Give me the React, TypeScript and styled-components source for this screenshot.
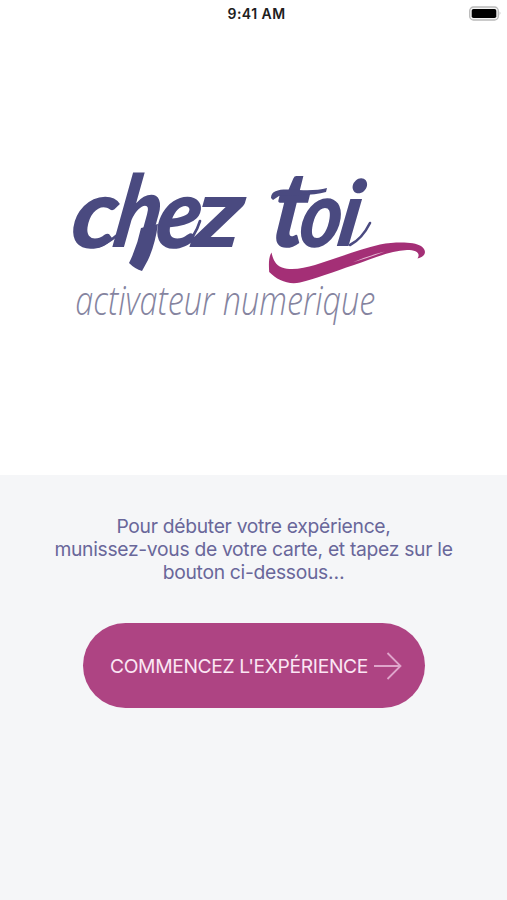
import React from 'react';
import styled, { createGlobalStyle } from 'styled-components';

const GlobalStyle = createGlobalStyle`
  *, *::before, *::after { box-sizing: border-box; }
  html, body { margin: 0; padding: 0; background: #fff; }
  body { font-family: Inter, 'Liberation Sans', sans-serif; }
`;

const Screen = styled.div`
  display: flex;
  flex-direction: column;
  width: 100%;
  height: 900px;
  overflow: hidden;
`;

const StatusBar = styled.header`
  display: grid;
  grid-template-columns: 1fr auto 1fr;
  align-items: center;
  height: 28px;
  padding: 0 5px 0 11px;
`;

const Clock = styled.time`
  grid-column: 2;
  font-size: 14px;
  font-weight: 600;
  line-height: 28px;
  letter-spacing: 0.45px;
  color: #202020;
`;

const Battery = styled.svg`
  justify-self: end;
  display: block;
  margin-bottom: 2px;
`;

const Hero = styled.section`
  display: flex;
  justify-content: center;
  height: 447px;
  padding-top: 132px;
`;

const Logo = styled.svg`
  display: block;
  width: 367px;
  height: 180px;
  margin-right: 9px;
  overflow: visible;
`;

const Brush = styled.text`
  font-family: Lato, sans-serif;
  font-size: 100px;
  font-weight: 900;
  font-style: italic;
  fill: #4a4a80;
`;

const Tagline = styled.text`
  font-family: 'Open Sans', sans-serif;
  font-size: 40px;
  font-weight: 300;
  font-style: italic;
  fill: #85849f;
`;

const Panel = styled.main`
  flex: 1;
  display: flex;
  flex-direction: column;
  align-items: center;
  padding-top: 40px;
  background: #f5f6f8;
`;

const Intro = styled.p`
  margin: 0;
  text-align: center;
  font-size: 19.3px;
  line-height: 23.2px;
  letter-spacing: -0.3px;
  color: #69679a;
  white-space: nowrap;
`;

const StartButton = styled.button`
  display: flex;
  align-items: center;
  justify-content: center;
  gap: 5px;
  width: 342px;
  height: 85px;
  margin-top: 38.6px;
  padding: 0 0 0 5px;
  border: 0;
  border-radius: 43px;
  background: #ae4483;
  color: #fbe6f4;
  font: 400 19.3px/24px Inter, sans-serif;
  letter-spacing: -0.36px;
  white-space: nowrap;
`;

const Arrow = styled.svg`
  flex: none;
  display: block;
`;

export default function App() {
  return (
    <>
      <GlobalStyle />
      <Screen>
        <StatusBar>
          <Clock>9:41 AM</Clock>
          <Battery width="33" height="15" viewBox="0 0 33 15" aria-label="Batterie">
            <rect x="0.7" y="1" width="28.6" height="13" rx="3.8" fill="#f4f4f4" stroke="#b9b9b9" strokeWidth="1.3" />
            <rect x="2.7" y="3" width="24.6" height="9" rx="1.8" fill="#000" />
            <path d="M30.7 5.3Q32.5 7.5 30.7 9.7Z" fill="#aaa" />
          </Battery>
        </StatusBar>
        <Hero>
          <Logo viewBox="65 160 367 180" role="img" aria-label="chez toi, activateur numerique">
            <Brush transform="translate(68 248) skewX(-7) scale(1.02 .98)">c</Brush>
            <Brush transform="translate(110 247) skewX(-10) scale(.84 1)">h</Brush>
            <Brush transform="translate(152 248) skewX(-8) scale(.92 .98)">e</Brush>
            <Brush transform="translate(190 247) skewX(-8) scale(1.12 .97)">z</Brush>
            <Brush transform="translate(268 247) skewX(-8) scale(.93 1.06)">t</Brush>
            <Brush transform="translate(296 247) skewX(-8) scale(.8 .93)">o</Brush>
            <Brush transform="translate(334 246) skewX(-10) scale(.86 .91)">i</Brush>

            {/* brush flourishes around the lettering */}
            <g fill="#4a4a80">
              <path d="M140 228L157 224Q154 245 147 260L141 271Q134 269 128 263Q136 247 140 228Z" />
              <path d="M270 198C270 188 284 189 298 190Q315 191 326 188L325 192Q315 195 299 195Q284 195 278 196L272 200Z" />
            </g>
            <g fill="none" stroke="#4a4a80" strokeWidth="2.6" strokeLinecap="round">
              <path d="M98 246Q107 243 115 236" />
              <path d="M184 244Q194 237 199 221" />
              <path d="M349 245Q361 239 369 223" />
            </g>

            <path
              d="M270.5 252.5C272 259 274 265 281 267.6C291 271 303 268 314 265C336 258 357 250 379 244.5C396 241.5 413 242 420 246C427 251 424 257 416.5 258.5C420 253 415 250 406 250C388 251 371 259 353 265C332 272 314 279 299 282.5C287 285 276 280 268.2 272C267.7 265 267.5 257 270.5 252.5Z"
              fill="#a42f76"
            />
            <path d="M352 262.3Q366 256 384 251.6Q367 258 352 262.3" fill="#e6bfd7" />
            <Tagline x="74.3" y="315" textLength="300" lengthAdjust="spacingAndGlyphs">activateur numerique</Tagline>
          </Logo>
        </Hero>
        <Panel>
          <Intro>
            Pour débuter votre expérience,<br />
            munissez-vous de votre carte, et tapez sur le<br />
            bouton ci-dessous…
          </Intro>
          <StartButton type="button">
            COMMENCEZ L'EXPÉRIENCE
            <Arrow width="29" height="28" viewBox="0 0 29 28" fill="none" stroke="#dfa5cb" strokeWidth="1.8">
              <path d="M1 14H27.5M14.5 1L27.5 14L14.5 27" />
            </Arrow>
          </StartButton>
        </Panel>
      </Screen>
    </>
  );
}
